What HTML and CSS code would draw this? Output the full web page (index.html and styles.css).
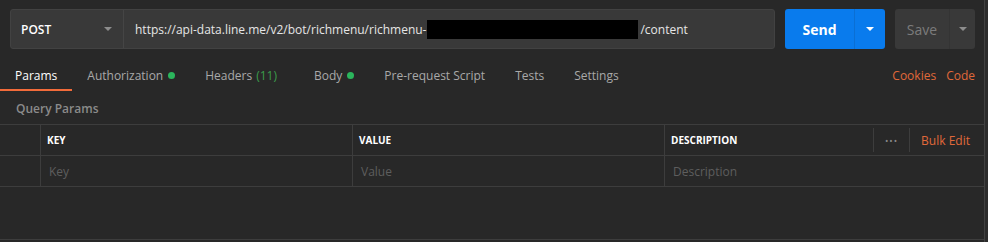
FILE: index.html
```html
<!DOCTYPE html>
<html lang="en">
<head>
  <meta charset="UTF-8" />
  <title>Request - Postman</title>
  <link rel="stylesheet" href="styles.css">
</head>
<body>

<div class="app">
  <div class="req-bar">
    <div class="url-group">
      <div class="method">
        <span>POST</span>
        <span class="caret gray"></span>
      </div>
      <div class="url">
        <span>https://api-data.line.me/v2/bot/richmenu/richmenu-</span><span class="redact"></span><span>/content</span>
      </div>
    </div>
    <div class="split-btn send-btn">
      <span class="main">Send</span>
      <span class="drop"><span class="caret white"></span></span>
    </div>
    <div class="split-btn save-btn">
      <span class="main">Save</span>
      <span class="drop"><span class="caret gray"></span></span>
    </div>
  </div>

  <div class="tabs">
    <div class="tab active">Params</div>
    <div class="tab">Authorization <span class="dot"></span></div>
    <div class="tab">Headers <span class="count">(11)</span></div>
    <div class="tab">Body <span class="dot"></span></div>
    <div class="tab">Pre-request Script</div>
    <div class="tab">Tests</div>
    <div class="tab">Settings</div>
    <div class="tab-links">
      <span>Cookies</span>
      <span>Code</span>
    </div>
  </div>

  <div class="section-title">Query Params</div>

  <div class="params">
    <div class="cell check"></div>
    <div class="cell head">KEY</div>
    <div class="cell head">VALUE</div>
    <div class="cell head desc-head">
      <span>DESCRIPTION</span>
      <div class="head-actions">
        <span class="sep"></span>
        <span class="more">•••</span>
        <span class="sep"></span>
        <span class="bulk">Bulk Edit</span>
      </div>
    </div>

    <div class="cell check"></div>
    <div class="cell ph">Key</div>
    <div class="cell ph">Value</div>
    <div class="cell ph">Description</div>
  </div>

  <div class="empty-area"></div>
</div>

</body>
</html>
```

FILE: styles.css
```css
body {
  margin: 0;
  background: #2c2c2c;
  font-family: "Open Sans", "Liberation Sans", sans-serif;
  font-size: 12px;
  color: #a9a9a9;
}
.app {
  width: 985px;
  height: 242px;
  background: #282828;
  border-right: 1px solid #414141;
  box-sizing: border-box;
  overflow: hidden;
}

/* request bar */
.req-bar {
  display: flex;
  gap: 10px;
  padding: 9px 9px 0 10px;
  height: 40px;
}
.url-group {
  flex: 1;
  display: flex;
  background: #393939;
  border: 1px solid #424242;
  border-radius: 3px;
}
.method {
  width: 113px;
  display: flex;
  align-items: center;
  justify-content: space-between;
  padding: 0 11px 0 10px;
  box-sizing: border-box;
  border-right: 1px solid #454545;
  color: #fff;
  font-weight: 600;
}
.url {
  flex: 1;
  display: flex;
  align-items: center;
  padding-left: 11px;
  color: #e6e6e6;
  white-space: nowrap;
}
.redact {
  display: inline-block;
  width: 211px;
  height: 19px;
  background: #000;
  margin: 0 2px 0 1px;
}
.caret {
  width: 0;
  height: 0;
  border-left: 4px solid transparent;
  border-right: 4px solid transparent;
  border-top: 4px solid #8a8a8a;
}
.caret.white { border-top-color: #fff; }
.caret.gray { border-top-color: #8d8d8d; }

.split-btn {
  display: flex;
  border-radius: 3px;
  overflow: hidden;
}
.split-btn .main {
  display: flex;
  align-items: center;
  justify-content: center;
}
.split-btn .drop {
  display: flex;
  align-items: center;
  justify-content: center;
}
.send-btn {
  width: 100px;
  background: #097bed;
}
.send-btn .main {
  width: 69px;
  color: #fff;
  font-weight: 700;
  font-size: 14px;
  border-right: 1px solid #0a6fd4;
}
.send-btn .drop { flex: 1; }
.save-btn {
  width: 80px;
  background: #393939;
}
.save-btn .main {
  width: 54px;
  color: #7c7c7c;
  font-size: 14px;
  border-right: 1px solid #343434;
}
.save-btn .drop { flex: 1; }

/* tabs */
.tabs {
  display: flex;
  margin-top: 11px;
  height: 31px;
}
.tab {
  display: flex;
  align-items: center;
  padding: 2px 15px 0;
  border-bottom: 2px solid transparent;
  white-space: nowrap;
}
.tab.active {
  color: #fff;
  border-bottom-color: #f26b3a;
}
.dot {
  display: inline-block;
  width: 7px;
  height: 7px;
  border-radius: 50%;
  background: #2bb55c;
  margin-left: 5px;
}
.count {
  color: #3b9c4b;
  margin-left: 4px;
  margin-right: 7px;
}
.tab-links {
  margin-left: auto;
  display: flex;
  align-items: center;
  gap: 10px;
  padding: 2px 9px 2px 0;
  color: #e0683a;
}

.section-title {
  margin: 9px 0 7px 16px;
  line-height: 17px;
  font-weight: 600;
  color: #8b8b8b;
}

/* params table */
.params {
  display: grid;
  grid-template-columns: 40px 312px 312px 1fr;
  border-top: 1px solid #3d3d3d;
}
.cell {
  height: 30px;
  display: flex;
  align-items: center;
  padding-left: 6px;
  border-bottom: 1px solid #3d3d3d;
  border-left: 1px solid #3d3d3d;
}
.cell.check {
  border-left: none;
}
.cell.head {
  color: #fff;
  font-weight: 700;
  font-size: 10px;
}
.cell.ph {
  padding-left: 8px;
  color: #5e5e5e;
}
.desc-head {
  justify-content: space-between;
}
.head-actions {
  display: flex;
  align-items: center;
  gap: 11px;
  padding-right: 14px;
}
.sep {
  width: 1px;
  height: 24px;
  background: #3d3d3d;
}
.more {
  color: #8a8a8a;
  font-size: 9px;
  letter-spacing: 1px;
  font-weight: 400;
}
.bulk {
  color: #e0683a;
  font-size: 12px;
  font-weight: 400;
}
.empty-area {
  height: 52px;
  border-bottom: 1px solid #3d3d3d;
}
```
